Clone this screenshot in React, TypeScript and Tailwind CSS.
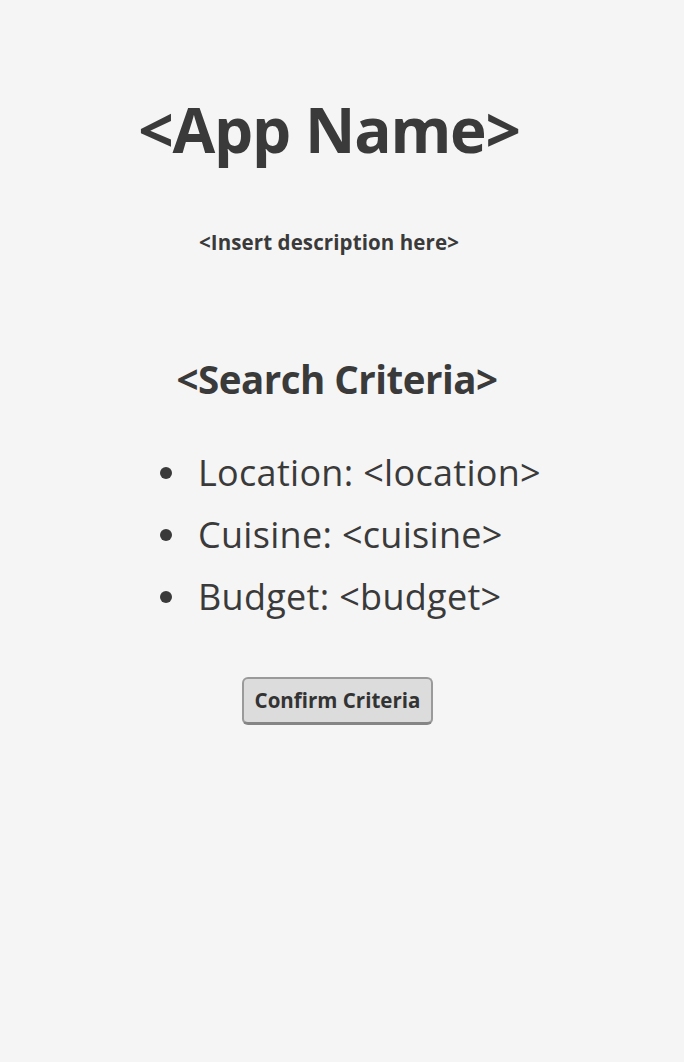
const criteria = [
  { label: 'Location', value: '<location>' },
  { label: 'Cuisine', value: '<cuisine>' },
  { label: 'Budget', value: '<budget>' },
];

export default function App() {
  return (
    <div
      className="min-h-[1062px] w-full bg-[#f5f5f5] text-[#3a3a3a]"
      style={{ fontFamily: '"Open Sans", "Liberation Sans", sans-serif' }}
    >
      <div className="flex flex-col items-center pt-[84px]">
        <h1 className="text-[62px] font-bold leading-[90px] tracking-[-1.2px] pr-[26px]">
          &lt;App Name&gt;
        </h1>

        <p className="mt-[55px] text-[20.5px] font-bold leading-[26px] tracking-[0.1px] pr-[26px]">
          &lt;Insert description here&gt;
        </p>

        <h2 className="mt-[99px] text-[38.5px] font-bold leading-[50px] tracking-[-0.5px] pr-[10px]">
          &lt;Search Criteria&gt;
        </h2>

        <ul className="mt-[45px] flex flex-col gap-[14px] self-start pl-[160px]">
          {criteria.map((c) => (
            <li key={c.label} className="flex items-center text-[36px] leading-[48px] tracking-[0.3px]">
              <span className="mr-[26px] h-[12px] w-[12px] shrink-0 rounded-full bg-[#3a3a3a]" />
              {c.label}: {c.value}
            </li>
          ))}
        </ul>

        <button
          type="button"
          className="mt-[56px] mr-[9px] h-[48px] w-[191px] rounded-[6px] border-2 border-b-[3px] border-[#9a9a9a] border-b-[#858585] bg-[#dcdcdc] text-[20.5px] font-bold text-[#333]"
        >
          Confirm Criteria
        </button>
      </div>
    </div>
  );
}
